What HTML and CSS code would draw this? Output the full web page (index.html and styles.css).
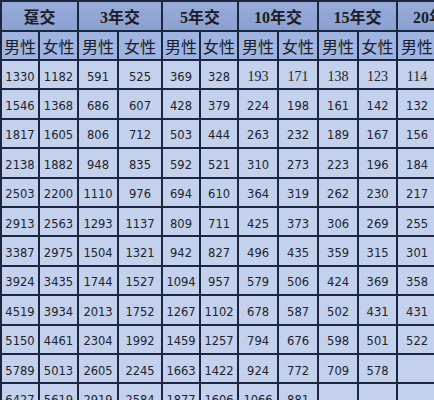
FILE: index.html
```html
<!DOCTYPE html>
<html lang="zh">
<head>
<meta charset="utf-8">
<link rel="stylesheet" href="styles.css">
</head>
<body>
<table class="rates">
<colgroup>
<col class="c38"><col class="c39"><col class="c40"><col class="c44"><col class="c38"><col class="c38"><col class="c40"><col class="c40"><col class="c40"><col class="c39"><col class="c40"><col class="c40">
</colgroup>
<thead>
<tr class="group-row">
<th colspan="2" class="grp">趸交</th>
<th colspan="2" class="grp">3年交</th>
<th colspan="2" class="grp">5年交</th>
<th colspan="2" class="grp">10年交</th>
<th colspan="2" class="grp">15年交</th>
<th colspan="2" class="grp grp-left">20年交</th>
</tr>
<tr class="sex-row">
<th>男性</th><th class="gend">女性</th>
<th>男性</th><th class="gend">女性</th>
<th>男性</th><th class="gend">女性</th>
<th>男性</th><th class="gend">女性</th>
<th>男性</th><th class="gend">女性</th>
<th>男性</th><th class="gend">女性</th>
</tr>
</thead>
<tbody>
<tr><td>1330</td><td class="gend">1182</td><td>591</td><td class="gend">525</td><td>369</td><td class="gend">328</td><td class="serif">193</td><td class="gend serif">171</td><td class="serif">138</td><td class="gend serif">123</td><td class="serif">114</td><td class="gend"></td></tr>
<tr><td>1546</td><td class="gend">1368</td><td>686</td><td class="gend">607</td><td>428</td><td class="gend">379</td><td>224</td><td class="gend">198</td><td>161</td><td class="gend">142</td><td>132</td><td class="gend"></td></tr>
<tr><td>1817</td><td class="gend">1605</td><td>806</td><td class="gend">712</td><td>503</td><td class="gend">444</td><td>263</td><td class="gend">232</td><td>189</td><td class="gend">167</td><td>156</td><td class="gend"></td></tr>
<tr><td>2138</td><td class="gend">1882</td><td>948</td><td class="gend">835</td><td>592</td><td class="gend">521</td><td>310</td><td class="gend">273</td><td>223</td><td class="gend">196</td><td>184</td><td class="gend"></td></tr>
<tr><td>2503</td><td class="gend">2200</td><td>1110</td><td class="gend">976</td><td>694</td><td class="gend">610</td><td>364</td><td class="gend">319</td><td>262</td><td class="gend">230</td><td>217</td><td class="gend"></td></tr>
<tr><td>2913</td><td class="gend">2563</td><td>1293</td><td class="gend">1137</td><td>809</td><td class="gend">711</td><td>425</td><td class="gend">373</td><td>306</td><td class="gend">269</td><td>255</td><td class="gend"></td></tr>
<tr><td>3387</td><td class="gend">2975</td><td>1504</td><td class="gend">1321</td><td>942</td><td class="gend">827</td><td>496</td><td class="gend">435</td><td>359</td><td class="gend">315</td><td>301</td><td class="gend"></td></tr>
<tr><td>3924</td><td class="gend">3435</td><td>1744</td><td class="gend">1527</td><td>1094</td><td class="gend">957</td><td>579</td><td class="gend">506</td><td>424</td><td class="gend">369</td><td>358</td><td class="gend"></td></tr>
<tr><td>4519</td><td class="gend">3934</td><td>2013</td><td class="gend">1752</td><td>1267</td><td class="gend">1102</td><td>678</td><td class="gend">587</td><td>502</td><td class="gend">431</td><td>431</td><td class="gend"></td></tr>
<tr><td>5150</td><td class="gend">4461</td><td>2304</td><td class="gend">1992</td><td>1459</td><td class="gend">1257</td><td>794</td><td class="gend">676</td><td>598</td><td class="gend">501</td><td>522</td><td class="gend"></td></tr>
<tr><td>5789</td><td class="gend">5013</td><td>2605</td><td class="gend">2245</td><td>1663</td><td class="gend">1422</td><td>924</td><td class="gend">772</td><td>709</td><td class="gend">578</td><td></td><td class="gend"></td></tr>
<tr><td>6427</td><td class="gend">5619</td><td>2919</td><td class="gend">2584</td><td>1877</td><td class="gend">1606</td><td>1066</td><td class="gend">881</td><td></td><td class="gend"></td><td></td><td class="gend"></td></tr>
</tbody>
</table>
</body>
</html>
```
FILE: styles.css
```css
html, body {
  margin: 0;
  padding: 0;
  background: #ffffff;
  overflow: hidden;
}

.rates {
  border-collapse: collapse;
  table-layout: fixed;
  width: 476px;
  font-family: "Liberation Sans", "Noto Sans CJK SC", sans-serif;
  color: #1c1f2a;
}

.c38 { width: 38px; }
.c39 { width: 39px; }
.c40 { width: 40px; }
.c44 { width: 44px; }

.rates th,
.rates td {
  border: 2px solid #1d2640;
  padding: 0;
  text-align: center;
  overflow: hidden;
  white-space: nowrap;
}

.group-row th {
  height: 28px;
  background: linear-gradient(#98acd8, #8aa0d0);
  font-family: "Liberation Serif", "Noto Sans CJK SC", serif;
  font-weight: bold;
  font-size: 16px;
  color: #1a1d28;
}

.sex-row th {
  height: 27px;
  background: #9fb4e0;
  font-family: "Noto Sans CJK SC", sans-serif;
  font-weight: normal;
  font-size: 16px;
  color: #1a1d28;
}

.rates td {
  height: 29.4px;
  background: #c3d1ec;
  font-family: "DejaVu Sans", "Liberation Sans", sans-serif;
  font-size: 11.5px;
  padding-top: 4px;
  box-sizing: border-box;
  color: #20232c;
}

.rates td.serif {
  font-family: "Liberation Serif", serif;
  font-size: 14px;
}
```
